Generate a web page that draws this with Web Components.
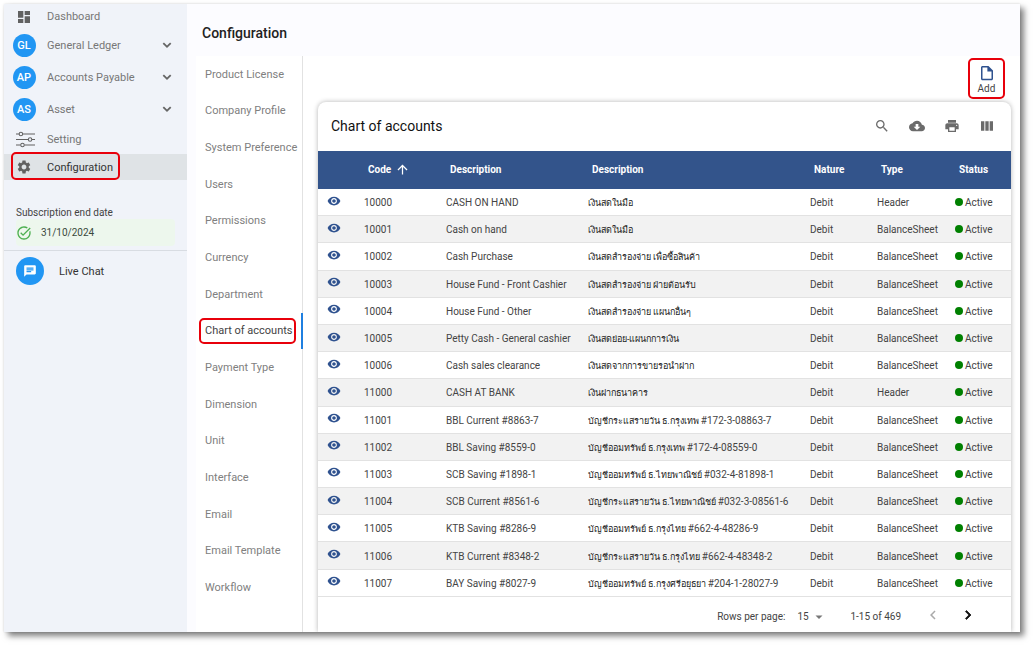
<!DOCTYPE html>
<html lang="en">
<head>
<meta charset="utf-8">
<title>Configuration - Chart of accounts</title>
<style>
  body { margin: 0; background: #fff; font-family: Roboto, "Noto Sans", "Liberation Sans", sans-serif; font-size: 11px; color: #555; }
</style>
</head>
<body>
<app-shell>
  <side-bar slot="side"></side-bar>
  <page-header slot="header">Configuration</page-header>
  <config-tabs slot="tabs" current="Chart of accounts"></config-tabs>
  <add-action slot="action">Add</add-action>
  <accounts-card slot="card"></accounts-card>
</app-shell>

<script>
const ICONS = {
  dashboard: '<path d="M3 13h8V3H3v10zm0 8h8v-6H3v6zm10 0h8V11h-8v10zm0-18v6h8V3h-8z"/>',
  sliders: '<g fill="none" stroke="currentColor" stroke-width="1.3"><path d="M0 5h4M8.500 5H24M0 12h15.500M20 12h4M0 19h6M10.500 19H24"/><circle cx="6.200" cy="5" r="2.200"/><circle cx="17.800" cy="12" r="2.200"/><circle cx="8.200" cy="19" r="2.200"/></g>',
  gear: '<path d="M19.140 12.940c.04-.3.06-.61.06-.94 0-.32-.02-.64-.07-.94l2.030-1.580c.18-.14.23-.41.12-.61l-1.920-3.320c-.12-.22-.37-.29-.59-.22l-2.390.96c-.5-.38-1.030-.7-1.620-.94l-.36-2.540c-.04-.24-.24-.41-.48-.41h-3.840c-.24 0-.43.17-.47.41l-.36 2.540c-.59.24-1.130.57-1.620.94l-2.390-.96c-.22-.08-.47 0-.59.22L2.740 8.870c-.12.21-.08.47.12.61l2.030 1.580c-.05.3-.09.63-.09.94s.02.64.07.94l-2.030 1.580c-.18.14-.23.41-.12.61l1.920 3.320c.12.22.37.29.59.22l2.390-.96c.5.38 1.030.7 1.620.94l.36 2.540c.05.24.24.41.48.41h3.840c.24 0 .44-.17.47-.41l.36-2.540c.59-.24 1.130-.56 1.620-.94l2.390.96c.22.08.47 0 .59-.22l1.920-3.320c.12-.22.07-.47-.12-.61l-2.010-1.580zM12 15.600c-1.980 0-3.600-1.620-3.600-3.600s1.620-3.600 3.600-3.600 3.600 1.620 3.600 3.600-1.620 3.600-3.600 3.600z"/>',
  down: '<path d="M7.410 8.090 12 12.670l4.590-4.580L18.500 10 12 16.500 5.500 10z"/>',
  done: '<path d="M22 5.180 10.590 16.600l-4.240-4.240 1.410-1.410 2.830 2.830 10-10L22 5.180zM19.790 10.220c.13.570.21 1.170.21 1.780 0 4.420-3.580 8-8 8s-8-3.580-8-8 3.580-8 8-8c1.580 0 3.040.46 4.280 1.250l1.440-1.440C16.100 2.670 14.130 2 12 2 6.480 2 2 6.480 2 12s4.480 10 10 10 10-4.480 10-10c0-1.190-.22-2.330-.6-3.390l-1.610 1.610z"/>',
  chat: '<path d="M20 2H4c-1.100 0-1.990.9-1.990 2L2 22l4-4h14c1.100 0 2-.9 2-2V4c0-1.100-.9-2-2-2zM6 9h12v2H6V9zm8 5H6v-2h8v2zm4-6H6V6h12v2z"/>',
  file: '<path d="M14 2.500H6c-1.100 0-2 .9-2 2v15c0 1.100.9 2 2 2h12c1.100 0 2-.9 2-2v-11l-6-6zM6 19.500v-15h6.500v5.500H18v9.500H6z"/>',
  search: '<path d="M15.500 14h-.79l-.28-.27C15.410 12.590 16 11.110 16 9.500 16 5.910 13.090 3 9.500 3S3 5.910 3 9.500 5.910 16 9.500 16c1.610 0 3.090-.59 4.230-1.570l.27.28v.79l5 4.990L20.490 19l-4.990-5zm-6 0C7.010 14 5 11.990 5 9.500S7.010 5 9.500 5 14 7.010 14 9.500 11.990 14 9.500 14z"/>',
  cloud: '<path d="M19.350 10.040C18.670 6.590 15.640 4 12 4 9.110 4 6.600 5.640 5.350 8.040 2.340 8.360 0 10.910 0 14c0 3.310 2.690 6 6 6h13c2.760 0 5-2.240 5-5 0-2.640-2.050-4.780-4.650-4.960zM17 13l-5 5-5-5h3V9h4v4h3z"/>',
  print: '<path d="M19 8H5c-1.660 0-3 1.340-3 3v6h4v4h12v-4h4v-6c0-1.660-1.340-3-3-3zm-3 11H8v-5h8v5zm3-7c-.55 0-1-.45-1-1s.45-1 1-1 1 .45 1 1-.45 1-1 1zm-1-9H6v4h12V3z"/>',
  columns: '<path d="M3 5h5v14H3zM9.500 5h5v14h-5zM16 5h5v14h-5z"/>',
  up: '<path d="m4 12 1.410 1.410L11 7.830V20h2V7.830l5.580 5.590L20 12l-8-8-8 8z"/>',
  eye: '<path d="M12 4.500C7 4.500 2.730 7.610 1 12c1.730 4.390 6 7.500 11 7.500s9.270-3.110 11-7.500c-1.730-4.390-6-7.500-11-7.500zM12 17c-2.760 0-5-2.240-5-5s2.240-5 5-5 5 2.240 5 5-2.240 5-5 5zm0-8c-1.660 0-3 1.340-3 3s1.340 3 3 3 3-1.340 3-3-1.340-3-3-3z"/>',
  caret: '<path d="m5 9 7 7 7-7z"/>',
  prev: '<path d="M15.410 7.410 14 6l-6 6 6 6 1.410-1.410L10.830 12z"/>',
  next: '<path d="M10 6 8.590 7.410 13.170 12l-4.580 4.590L10 18l6-6z" stroke="currentColor"/>'
};

class BaseElement extends HTMLElement {
  connectedCallback() {
    if (this.shadowRoot) return;
    this.attachShadow({ mode: 'open' }).innerHTML = this.render();
  }
}

class UiIcon extends BaseElement {
  render() {
    return `<style>
      :host { display: inline-block; flex: none; width: var(--icon, 16px); height: var(--icon, 16px); }
      svg { display: block; width: 100%; height: 100%; fill: currentColor; }
    </style><svg viewBox="0 0 24 24" aria-hidden="true">${ICONS[this.getAttribute('name')]}</svg>`;
  }
}
customElements.define('ui-icon', UiIcon);

/* Rounded red frame that calls out the element it wraps */
class CallOut extends BaseElement {
  render() {
    return `<style>
      :host { display: block; box-sizing: border-box; border: 2px solid #e8000b; border-radius: 5px; }
    </style><slot></slot>`;
  }
}
customElements.define('call-out', CallOut);

class AppShell extends BaseElement {
  render() {
    return `<style>
      :host { display: grid; grid-template-columns: 183px minmax(0, 1fr); margin: 4px 13px 14px 4px;
        min-height: calc(100vh - 18px); background: #fcfcff; box-shadow: 4px 4px 6px rgba(0,0,0,.5), 0 0 2px rgba(0,0,0,.12); }
      main { display: flex; flex-direction: column; min-width: 0; padding-left: 9px; }
      .body { flex: 1; display: grid; grid-template-columns: 107px minmax(0, 1fr); background: #fff; }
      .work { display: flex; flex-direction: column; padding: 2px 9px 0 15px; min-width: 0; }
      ::slotted([slot=action]) { align-self: flex-end; margin: 0 6px 3px 0; }
      ::slotted([slot=card]) { flex: 1; }
    </style>
    <slot name="side"></slot>
    <main>
      <slot name="header"></slot>
      <div class="body">
        <slot name="tabs"></slot>
        <section class="work"><slot name="action"></slot><slot name="card"></slot></section>
      </div>
    </main>`;
  }
}
customElements.define('app-shell', AppShell);

class NavItem extends BaseElement {
  render() {
    const badge = this.getAttribute('badge');
    const icon = this.getAttribute('icon');
    const mark = badge ? `<span class="badge">${badge}</span>` : `<ui-icon name="${icon}"></ui-icon>`;
    const body = `<span class="mark">${mark}</span><span><slot></slot></span>`;
    return `<style>
      :host { display: block; height: 29px; color: #777; }
      :host([badge]) { height: 32px; }
      :host([icon=dashboard]) { height: 25px; }
      :host([active]) { height: 26px; background: #dfe3e6; color: #333; }
      .item { display: flex; align-items: center; box-sizing: border-box; width: 100%; height: 100%; padding: 0 12px 0 0; border: 0;
        background: none; font: inherit; color: inherit; text-decoration: none; text-align: left; position: relative; }
      .mark { box-sizing: border-box; width: 40px; margin-right: 3px; display: flex; justify-content: center; color: #616161; --icon: 16px; }
      :host([icon=sliders]) .mark { --icon: 19px; padding-left: 3px; }
      .badge { width: 23px; height: 23px; border-radius: 50%; background: #2196f3; color: #fff; font-size: 11px; font-weight: 500;
        line-height: 23px; text-align: center; }
      .chev { margin-left: auto; color: #666; --icon: 16px; }
      call-out { position: absolute; left: 7px; top: -2px; width: 109px; height: 28px; }
    </style>` + (badge
      ? `<button type="button" class="item" aria-expanded="false">${body}<ui-icon class="chev" name="down"></ui-icon></button>`
      : `<a class="item" href="#${icon}">${body}${this.hasAttribute('active') ? '<call-out></call-out>' : ''}</a>`);
  }
}
customElements.define('nav-item', NavItem);

class SideBar extends BaseElement {
  render() {
    return `<style>
      :host { display: block; background: #f0f3f9; }
      nav { display: block; }
      .sub { padding: 26px 12px 4px; color: #444; font-size: 10px; border-bottom: 1px solid #d8dce2; }
      .sub p { margin: 0; line-height: 13px; }
      .date { display: flex; align-items: center; gap: 9px; height: 27px; border-radius: 4px; background: #edf7ed; color: #3a4a3c; }
      .date ui-icon { color: #4caf50; --icon: 16px; }
      .chat { display: flex; align-items: center; gap: 15px; padding: 6px 12px; color: #333; text-decoration: none; }
      .chat span { display: grid; place-items: center; width: 28px; height: 28px; border-radius: 50%; background: #2196f3; color: #fff; --icon: 14px; }
    </style>
    <nav aria-label="Main">
      <nav-item icon="dashboard">Dashboard</nav-item>
      <nav-item badge="GL">General Ledger</nav-item>
      <nav-item badge="AP">Accounts Payable</nav-item>
      <nav-item badge="AS">Asset</nav-item>
      <nav-item icon="sliders">Setting</nav-item>
      <nav-item icon="gear" active>Configuration</nav-item>
    </nav>
    <div class="sub"><p>Subscription end date</p><div class="date"><ui-icon name="done"></ui-icon>31/10/2024</div></div>
    <a class="chat" href="#chat"><span><ui-icon name="chat"></ui-icon></span>Live Chat</a>`;
  }
}
customElements.define('side-bar', SideBar);

class PageHeader extends BaseElement {
  render() {
    return `<style>
      :host { display: block; padding: 18px 6px 12px; color: #222; }
      h1 { margin: 0; font-size: 14px; line-height: 22px; font-weight: 500; }
    </style><h1><slot></slot></h1>`;
  }
}
customElements.define('page-header', PageHeader);

class ConfigTabs extends BaseElement {
  render() {
    const tabs = ['Product License', 'Company Profile', 'System Preference', 'Users', 'Permissions', 'Currency', 'Department',
      'Chart of accounts', 'Payment Type', 'Dimension', 'Unit', 'Interface', 'Email', 'Email Template', 'Workflow'];
    const current = this.getAttribute('current');
    return `<style>
      :host { display: grid; border-right: 1px solid #e2e2e2; padding-bottom: 26px; }
      nav { display: grid; grid-auto-rows: 1fr; }
      a { position: relative; display: flex; align-items: center; padding-left: 9px; font-size: 11px; color: #808080; text-decoration: none; white-space: nowrap; }
      a[aria-current] { color: #444; border-right: 2px solid #1f7fe0; margin-right: -1px; }
      call-out { position: absolute; left: 3px; right: 5px; top: 5px; bottom: 5px; }
    </style><nav aria-label="Configuration">${tabs.map(t => t === current
      ? `<a href="#" aria-current="page">${t}<call-out></call-out></a>` : `<a href="#">${t}</a>`).join('')}</nav>`;
  }
}
customElements.define('config-tabs', ConfigTabs);

class AddAction extends BaseElement {
  render() {
    return `<style>
      :host { display: block; width: 37px; }
      button { display: flex; flex-direction: column; align-items: center; width: 100%; padding: 4px 0 2px; border: 0; background: none;
        font: inherit; font-size: 10px; line-height: 13px; color: #444; }
      ui-icon { color: #2f528f; --icon: 18px; }
    </style><call-out><button type="button"><ui-icon name="file"></ui-icon><slot></slot></button></call-out>`;
  }
}
customElements.define('add-action', AddAction);

const ACCOUNTS = [
  ['10000', 'CASH ON HAND', 'เงินสดในมือ', 'Header'],
  ['10001', 'Cash on hand', 'เงินสดในมือ', 'BalanceSheet'],
  ['10002', 'Cash Purchase', 'เงินสดสำรองจ่าย เพื่อซื้อสินค้า', 'BalanceSheet'],
  ['10003', 'House Fund - Front Cashier', 'เงินสดสำรองจ่าย ฝ่ายต้อนรับ', 'BalanceSheet'],
  ['10004', 'House Fund - Other', 'เงินสดสำรองจ่าย แผนกอื่นๆ', 'BalanceSheet'],
  ['10005', 'Petty Cash - General cashier', 'เงินสดย่อย-แผนกการเงิน', 'BalanceSheet'],
  ['10006', 'Cash sales clearance', 'เงินสดจากการขายรอนำฝาก', 'BalanceSheet'],
  ['11000', 'CASH AT BANK', 'เงินฝากธนาคาร', 'Header'],
  ['11001', 'BBL Current #8863-7', 'บัญชีกระแสรายวัน ธ.กรุงเทพ #172-3-08863-7', 'BalanceSheet'],
  ['11002', 'BBL Saving #8559-0', 'บัญชีออมทรัพย์ ธ.กรุงเทพ #172-4-08559-0', 'BalanceSheet'],
  ['11003', 'SCB Saving #1898-1', 'บัญชีออมทรัพย์ ธ.ไทยพาณิชย์ #032-4-81898-1', 'BalanceSheet'],
  ['11004', 'SCB Current #8561-6', 'บัญชีกระแสรายวัน ธ.ไทยพาณิชย์ #032-3-08561-6', 'BalanceSheet'],
  ['11005', 'KTB Saving #8286-9', 'บัญชีออมทรัพย์ ธ.กรุงไทย #662-4-48286-9', 'BalanceSheet'],
  ['11006', 'KTB Current #8348-2', 'บัญชีกระแสรายวัน ธ.กรุงไทย #662-4-48348-2', 'BalanceSheet'],
  ['11007', 'BAY Saving #8027-9', 'บัญชีออมทรัพย์ ธ.กรุงศรีอยุธยา #204-1-28027-9', 'BalanceSheet']
];

class AccountsTable extends BaseElement {
  render() {
    return `<style>
      :host { display: grid; }
      table { width: 100%; height: 100%; table-layout: fixed; border-collapse: separate; border-spacing: 0; font-size: 10px; color: #444; }
      th, td { padding: 0 0 0 4px; text-align: left; white-space: nowrap; }
      th { height: 37px; padding: 0 0 1px 8px; background: #33548b; color: #fff; font-weight: 700; }
      th span { display: flex; align-items: center; gap: 4px; --icon: 15px; }
      td { height: 24px; padding-top: 2px; border-bottom: 1px solid #e2e2e2; line-height: 14px; }
      tr:nth-child(even) td { background: #f2f2f2; }
      button { display: block; margin: 0 0 2px 5px; padding: 0; border: 0; background: none; color: #2f528f; --icon: 14px; }
      .view { width: 42px; } .code { width: 82px; } .desc { width: 142px; } .nature { width: 67px; } .type { width: 78px; } .status { width: 60px; }
      td.status::before { content: ""; display: inline-block; width: 8px; height: 8px; margin-right: 2px; border-radius: 50%; background: #008000; }
      .thai { color: #222; font-size: 9px; }
      .thai span { color: #444; font-size: 10px; }
      .view, .status { box-sizing: border-box; }
    </style>
    <table>
      <colgroup><col class="view"><col class="code"><col class="desc"><col><col class="nature"><col class="type"><col class="status"></colgroup>
      <thead><tr><th aria-label="View"></th><th aria-sort="ascending"><span>Code<ui-icon name="up"></ui-icon></span></th><th>Description</th><th>Description</th><th>Nature</th><th>Type</th><th>Status</th></tr></thead>
      <tbody>${ACCOUNTS.map(([code, name, thai, type]) => `<tr><td><button type="button" aria-label="View ${code}"><ui-icon name="eye"></ui-icon></button></td>
        <td>${code}</td><td>${name}</td><td class="thai" lang="th">${thai.replace(/#.*/, '<span>$&</span>')}</td><td>Debit</td><td>${type}</td><td class="status">Active</td></tr>`).join('')}</tbody>
    </table>`;
  }
}
customElements.define('accounts-table', AccountsTable);

class TablePager extends BaseElement {
  render() {
    return `<style>
      :host { display: flex; align-items: center; justify-content: flex-end; box-sizing: border-box; height: 35px; padding: 4px 34px 0 0; font-size: 10px; color: #444; }
      .size { position: relative; display: flex; align-items: center; margin: 0 25px 0 12px; }
      select { appearance: none; width: 28px; margin: 0; padding: 0; border: 0; background: none; font: inherit; color: inherit; }
      .size ui-icon { position: absolute; right: 0; color: #777; pointer-events: none; --icon: 12px; }
      button { display: block; padding: 0; border: 0; background: none; color: #111; --icon: 18px; }
      button:disabled { color: #aaa; margin: 0 17px 0 23px; }
    </style>
    <label for="rows">Rows per page:</label>
    <span class="size"><select id="rows"><option>15</option><option>50</option><option>100</option></select><ui-icon name="caret"></ui-icon></span>
    <span>1-15 of 469</span>
    <button type="button" disabled aria-label="Previous page"><ui-icon name="prev"></ui-icon></button>
    <button type="button" aria-label="Next page"><ui-icon name="next"></ui-icon></button>`;
  }
}
customElements.define('table-pager', TablePager);

class AccountsCard extends BaseElement {
  render() {
    return `<style>
      :host { display: flex; flex-direction: column; border-radius: 8px 8px 0 0; background: #fff; box-shadow: 0 0 5px rgba(0,0,0,.3); clip-path: inset(-8px -8px 0 -8px); }
      header { display: flex; align-items: center; justify-content: space-between; height: 48px; padding: 0 16px 1px 13px; }
      h2 { margin: 0; font-size: 14px; font-weight: 400; color: #111; }
      .tools { display: flex; gap: 19px; }
      button { padding: 0; border: 0; background: none; color: #6b6b6b; --icon: 16px; }
      button ui-icon { display: block; }
      accounts-table { flex: 1; }
    </style>
    <header><h2>Chart of accounts</h2><div class="tools">
      <button type="button" aria-label="Search"><ui-icon name="search"></ui-icon></button>
      <button type="button" aria-label="Download"><ui-icon name="cloud"></ui-icon></button>
      <button type="button" aria-label="Print"><ui-icon name="print"></ui-icon></button>
      <button type="button" aria-label="View columns"><ui-icon name="columns"></ui-icon></button>
    </div></header>
    <accounts-table></accounts-table>
    <table-pager></table-pager>`;
  }
}
customElements.define('accounts-card', AccountsCard);
</script>
</body>
</html>
